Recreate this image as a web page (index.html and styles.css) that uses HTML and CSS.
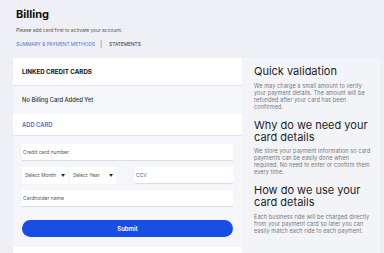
FILE: index.html
```html
<!DOCTYPE html>
<html lang="en">
<head>
    <meta charset="UTF-8" />
    <title>Billing</title>
    <link rel="stylesheet" href="styles.css">
</head>
<body>
    <div class="page-head">
        <h1>Billing</h1>
        <p class="sub-title">Please add card first to activate your account.</p>
        <div class="tabs">
            <span class="tab active">Summary &amp; Payment Methods</span>
            <span class="tab-sep">|</span>
            <span class="tab">Statements</span>
        </div>
    </div>

    <div class="main">
        <div class="card">
            <div class="card-header">Linked Credit Cards</div>
            <div class="empty-row">No Billing Card Added Yet</div>
            <div class="add-row">Add Card</div>
            <form class="card-form">
                <div class="field">Credit card number</div>
                <div class="field-row">
                    <div class="field select">Select Month <span class="caret">&#9660;</span></div>
                    <div class="field select">Select Year <span class="caret">&#9660;</span></div>
                    <div class="field">CCV</div>
                </div>
                <div class="field">Cardholder name</div>
                <button type="button" class="submit">Submit</button>
            </form>
            <div class="card-foot"></div>
        </div>

        <div class="info">
            <h2>Quick validation</h2>
            <p>We may charge a small amount to verify<br>
               your payment details. The amount will be<br>
               refunded after your card has been<br>
               confirmed.</p>
            <h2>Why do we need your card details</h2>
            <p>We store your payment information so card<br>
               payments can be easily done when<br>
               required. No need to enter or confirm them<br>
               every time.</p>
            <h2>How do we use your card details</h2>
            <p>Each business ride will be charged directly<br>
               from your payment card so later you can<br>
               easily match each ride to each payment.</p>
        </div>
    </div>
</body>
</html>
```

FILE: styles.css
```css
body {
    margin: 0;
    padding: 0;
    font-family: 'Inter', 'Noto Sans', sans-serif;
    background: #eef0f5;
    color: #1d1d2b;
    overflow: hidden;
}

.page-head {
    padding: 8px 0 0 16px;
    height: 50px;
}

h1 {
    margin: 0;
    font-size: 11px;
    font-weight: 700;
    line-height: 13px;
    color: #111;
}

.sub-title {
    margin: 5px 0 0;
    font-size: 4.9px;
    line-height: 8px;
    color: #555;
}

.tabs {
    display: flex;
    align-items: center;
    height: 8px;
    margin-top: 6px;
    font-size: 4.8px;
    text-transform: uppercase;
    color: #333;
}

.tab.active {
    color: #5b6fd6;
}

.tab-sep {
    margin: 0 7px 0 5px;
    font-size: 7px;
    font-weight: 300;
    color: #444;
}

.main {
    display: flex;
}

.card {
    margin-left: 13px;
    width: 229px;
    background: #ffffff;
}

.card-header {
    height: 27px;
    line-height: 27px;
    padding-left: 9px;
    font-size: 6.2px;
    font-weight: 700;
    text-transform: uppercase;
    color: #111;
    border-bottom: 1px solid #e3e5ec;
}

.empty-row {
    height: 28px;
    line-height: 28px;
    padding-left: 9px;
    font-size: 5.8px;
    font-weight: 500;
    color: #333;
    background: #f5f6fa;
}

.add-row {
    height: 21px;
    line-height: 21px;
    padding-left: 9px;
    font-size: 5.8px;
    font-weight: 600;
    text-transform: uppercase;
    color: #4a6bc9;
    border-bottom: 1px solid #e3e5ec;
}

.card-form {
    display: flex;
    flex-direction: column;
    gap: 6px;
    padding: 8px 9px 10px;
    background: #f5f6fa;
    margin: 0;
}

.field {
    position: relative;
    height: 17px;
    line-height: 17px;
    padding-left: 1px;
    font-size: 5px;
    color: #555;
    background: #ffffff;
    border-bottom: 1px solid #dcdde3;
    box-sizing: border-box;
}

.field-row {
    display: grid;
    grid-template-columns: 46px 46px 1fr;
    column-gap: 2px;
}

.field-row .field:last-child {
    margin-left: 17px;
}

.select {
    padding-left: 3px;
    border-bottom: none;
}

.caret {
    position: absolute;
    right: 3px;
    top: 0;
    font-size: 4px;
    color: #222;
}

.submit {
    margin-top: 7px;
    height: 17px;
    border: none;
    border-radius: 9px;
    background: #1a4de3;
    color: #ffffff;
    font-family: inherit;
    font-size: 6px;
    font-weight: 600;
    cursor: pointer;
}

.card-foot {
    height: 12px;
}

.info {
    width: 126px;
    padding: 7px 0 0 12px;
    background: #f3f4f8;
}

h2 {
    margin: 0;
    font-size: 11px;
    font-weight: 400;
    line-height: 12px;
    color: #1d1d2b;
}

.info p {
    margin: 5.5px 0 8px;
    font-size: 5.5px;
    letter-spacing: 0.1px;
    line-height: 7px;
    white-space: nowrap;
    color: #777;
}
```
